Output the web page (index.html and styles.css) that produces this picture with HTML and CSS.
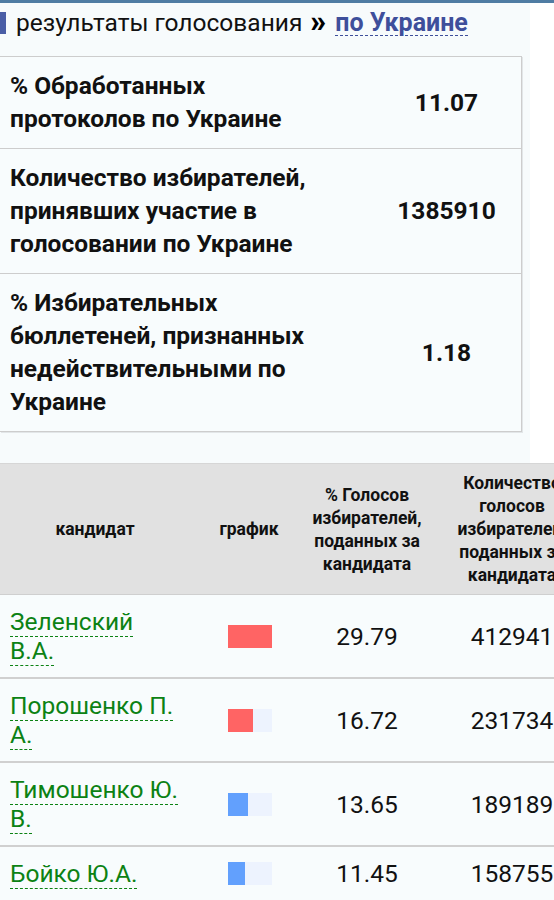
FILE: index.html
```html
<!DOCTYPE html>
<html lang="ru">
<head>
<meta charset="utf-8">
<title>результаты голосования</title>
<link rel="stylesheet" href="styles.css">
</head>
<body>
<div class="topbar"></div>
<div class="page">
  <h2 class="title"><span class="mark"></span><span class="title-text">результаты голосования</span><span class="arrows">»</span><a class="region" href="#">по Украине</a></h2>

  <table class="summary">
    <tr>
      <th class="label">% Обработанных протоколов по Украине</th>
      <td class="value">11.07</td>
    </tr>
    <tr>
      <th class="label">Количество избирателей, принявших участие в голосовании по Украине</th>
      <td class="value">1385910</td>
    </tr>
    <tr>
      <th class="label">% Избирательных бюллетеней, признанных недействительными по Украине</th>
      <td class="value">1.18</td>
    </tr>
  </table>

  <table class="results">
    <colgroup>
      <col class="c-name">
      <col class="c-chart">
      <col class="c-pct">
      <col class="c-count">
    </colgroup>
    <thead>
      <tr>
        <th>кандидат</th>
        <th>график</th>
        <th class="h-pct">% Голосов избирателей, поданных за кандидата</th>
        <th class="h-count">Количество голосов избирателей, поданных за кандидата</th>
      </tr>
    </thead>
    <tbody>
      <tr>
        <td class="name"><a href="#">Зеленский В.А.</a></td>
        <td class="chart"><div class="bar"><div class="fill red" style="width:100%"></div></div></td>
        <td class="num">29.79</td>
        <td class="num">412941</td>
      </tr>
      <tr>
        <td class="name"><a href="#">Порошенко П. А.</a></td>
        <td class="chart"><div class="bar"><div class="fill red" style="width:56%"></div></div></td>
        <td class="num">16.72</td>
        <td class="num">231734</td>
      </tr>
      <tr>
        <td class="name"><a href="#">Тимошенко Ю. В.</a></td>
        <td class="chart"><div class="bar"><div class="fill blue" style="width:46%"></div></div></td>
        <td class="num">13.65</td>
        <td class="num">189189</td>
      </tr>
      <tr>
        <td class="name"><a href="#">Бойко Ю.А.</a></td>
        <td class="chart"><div class="bar"><div class="fill blue" style="width:38%"></div></div></td>
        <td class="num">11.45</td>
        <td class="num">158755</td>
      </tr>
    </tbody>
  </table>
</div>
</body>
</html>
```
FILE: styles.css
```css
html, body {
  margin: 0;
  padding: 0;
  background: #ffffff;
  overflow-x: hidden;
}
body {
  font-family: Roboto, "Noto Sans", "DejaVu Sans", sans-serif;
  color: #111;
}
.topbar {
  height: 3px;
  background: #4f7ca3;
}
.page {
  width: 530px;
  background: #f7fbfc;
  padding-bottom: 30px;
}
.title {
  margin: 0;
  display: flex;
  align-items: center;
  height: 33px;
  padding-top: 3px;
  font-size: 24.5px;
  font-weight: 400;
  white-space: nowrap;
  color: #111;
}
.mark {
  display: inline-block;
  width: 6px;
  height: 22px;
  background: #4a5ea6;
  margin-right: 10px;
}
.arrows {
  font-weight: 900;
  margin: -3px 9px 0 8px;
  font-size: 31px;
  line-height: 1;
  color: #000;
}
.region {
  color: #3e4f9b;
  font-weight: 700;
  font-size: 25px;
  text-decoration: none;
  border-bottom: 1px dashed #3e4f9b;
  line-height: 25px;
}
.summary {
  margin-top: 17px;
  width: 522px;
  border-collapse: collapse;
  background: #f8fcfd;
  border: 1px solid #cdcdcd;
  border-left: none;
  box-shadow: 1px 1px 0 #e2e6e8;
  font-size: 24.5px;
  font-weight: 700;
}
.summary tr + tr th,
.summary tr + tr td {
  border-top: 1px solid #cdcdcd;
}
.summary .label {
  width: 312px;
  text-align: left;
  padding: 12px 50px 13px 10px;
  line-height: 33px;
  font-weight: 700;
  vertical-align: middle;
}
.summary .value {
  text-align: center;
  vertical-align: middle;
  padding: 12px 0 13px;
}
.results {
  margin-top: 31px;
  border-collapse: collapse;
  table-layout: fixed;
  width: 598px;
}
.c-name { width: 190px; }
.c-chart { width: 118px; }
.c-pct { width: 118px; }
.c-count { width: 172px; }
.results thead th {
  background: #e1e1e1;
  font-size: 17.5px;
  font-weight: 700;
  line-height: 23px;
  padding: 8px 4px 7px;
  text-align: center;
  vertical-align: middle;
  border-bottom: 1px solid #cfcfcf;
  border-top: 1px solid #d6d6d6;
}
.results thead th.h-pct {
  padding-left: 2px;
  padding-right: 2px;
}
.results thead th.h-count {
  padding-left: 10px;
  padding-right: 10px;
}
.results tbody td {
  background: #f8fcfd;
  border-bottom: 2px solid #d0d0d0;
  padding: 12px 0;
  vertical-align: middle;
}
.results tbody tr:last-child td {
  border-bottom: none;
}
.results tbody td.name {
  padding-left: 10px;
  padding-right: 8px;
  font-size: 24.5px;
  line-height: 29px;
}
.name a {
  color: #0c8214;
  text-decoration: none;
  border-bottom: 1px dashed #0c8214;
}
.chart {
  text-align: left;
}
.bar {
  width: 44px;
  height: 23px;
  margin-left: 38px;
  background: #edf3fe;
  display: flex;
}
.fill {
  height: 100%;
}
.fill.red { background: #ff6464; }
.fill.blue { background: #62a0fd; }
.num {
  text-align: center;
  font-size: 24.5px;
  color: #111;
}
```
